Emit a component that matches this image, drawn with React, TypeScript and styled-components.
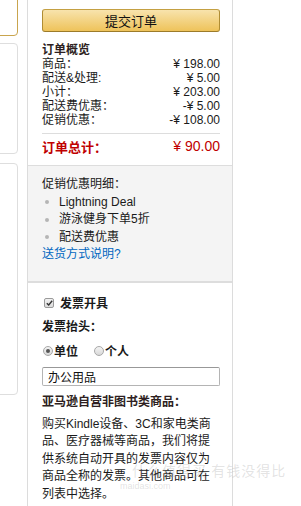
import styled, { createGlobalStyle } from 'styled-components'

const GlobalStyle = createGlobalStyle`
  html, body {
    margin: 0;
    padding: 0;
    background: #fff;
  }
  body {
    font-family: "Liberation Sans", "Noto Sans CJK SC", sans-serif;
    font-size: 12px;
    color: #1a1a1a;
    overflow: hidden;
  }
`

const Page = styled.div`
  position: relative;
  display: flex;
  align-items: flex-start;
  gap: 9px;
  height: 506px;
  overflow: hidden;
`

const LeftColumn = styled.div`
  display: flex;
  flex-direction: column;
  width: 18px;
  flex-shrink: 0;
`

const SideBox = styled.div<{ $gold?: boolean; $height: number; $top: number }>`
  box-sizing: border-box;
  width: 28px;
  margin-left: -10px;
  margin-top: ${({ $top }) => $top}px;
  height: ${({ $height }) => $height}px;
  border: 1px solid ${({ $gold }) => ($gold ? '#c9a54e' : '#dedede')};
  border-radius: 4px;
  background: #fff;
`

const Panel = styled.div`
  box-sizing: border-box;
  width: 206px;
  min-height: 506px;
  border-left: 1px solid #dcdcdc;
  border-right: 1px solid #dcdcdc;
  background: #fff;
`

const TopSection = styled.div`
  padding: 9px 12px 10px 14px;
`

const SubmitButton = styled.button`
  box-sizing: border-box;
  display: block;
  width: 178px;
  height: 23px;
  padding: 0;
  border: 1px solid;
  border-color: #c4a042 #b08d33 #9c7b2a;
  border-radius: 3px;
  background: linear-gradient(to bottom, #f8e3ad, #eec35a);
  font-family: inherit;
  font-size: 13px;
  color: #111;
  cursor: pointer;
`

const SummaryTitle = styled.h3`
  margin: 11px 0 0;
  font-size: 12px;
  line-height: 14px;
  font-weight: bold;
  color: #2e1f22;
`

const SummaryRow = styled.div`
  display: flex;
  justify-content: space-between;
  line-height: 14px;
  white-space: nowrap;
`

const Divider = styled.div`
  height: 1px;
  margin-top: 6px;
  background: #dddddd;
`

const TotalRow = styled.div`
  display: flex;
  justify-content: space-between;
  align-items: center;
  margin-top: 3px;
  height: 18px;
  color: #c00000;
  white-space: nowrap;
`

const TotalLabel = styled.span`
  font-size: 13px;
  font-weight: bold;
`

const TotalValue = styled.span`
  font-size: 14px;
`

const PromoSection = styled.div`
  padding: 10px 12px 17px 14px;
  border-top: 1px solid #dddddd;
  border-bottom: 2px solid #dddddd;
  background: #f4f4f4;
  line-height: 17.5px;
  font-size: 12px;
`

const PromoList = styled.ul`
  margin: 0;
  padding: 0;
  list-style: none;
`

const PromoItem = styled.li`
  display: flex;
  align-items: center;

  &::before {
    content: '';
    width: 4px;
    height: 4px;
    margin: 0 10px 0 3px;
    border-radius: 50%;
    background: #b5b5b5;
  }
`

const Link = styled.a`
  color: #0066c0;
  text-decoration: none;
`

const InvoiceSection = styled.div`
  padding: 10px 12px 0 14px;
`

const CheckRow = styled.label`
  display: flex;
  align-items: center;
  height: 20px;
  font-size: 12px;
  font-weight: bold;
`

const CheckBox = styled.span`
  box-sizing: border-box;
  display: flex;
  align-items: center;
  justify-content: center;
  width: 10px;
  height: 10px;
  margin: 0 6px 0 2px;
  border: 1px solid #9a9a9a;
  border-radius: 2px;
  background: linear-gradient(to bottom, #f2f2f2, #dcdcdc);
`

const FieldTitle = styled.div`
  margin-top: 4px;
  height: 20px;
  line-height: 20px;
  font-weight: bold;
`

const RadioRow = styled.div`
  display: flex;
  align-items: center;
  gap: 15px;
  margin-top: 4px;
  height: 20px;
`

const RadioOption = styled.label`
  display: flex;
  align-items: center;
  font-weight: bold;
`

const RadioDot = styled.span<{ $checked?: boolean }>`
  box-sizing: border-box;
  display: flex;
  align-items: center;
  justify-content: center;
  width: 10px;
  height: 10px;
  margin: 0 1px 0 1px;
  border: 1px solid #a8a8a8;
  border-radius: 50%;
  background: linear-gradient(to bottom, #f4f4f4, #d8d8d8);

  &::after {
    content: '';
    display: ${({ $checked }) => ($checked ? 'block' : 'none')};
    width: 4px;
    height: 4px;
    border-radius: 50%;
    background: #555;
  }
`

const TitleInput = styled.input`
  box-sizing: border-box;
  display: block;
  width: 178px;
  height: 19px;
  margin-top: 6px;
  padding: 0 5px;
  border: 1px solid #b4b4b4;
  border-top-color: #989898;
  border-radius: 2px;
  font-family: inherit;
  font-size: 12px;
  color: #111;
  outline: none;
`

const NoticeTitle = styled.h4`
  margin: 6px 0 0;
  line-height: 20px;
  font-size: 12px;
  font-weight: bold;
  color: #2e1f22;
`

const NoticeText = styled.p`
  width: 176px;
  margin: 4px 0 0;
  line-height: 17.5px;
  font-size: 12px;
`

const Watermark = styled.div`
  position: absolute;
  left: 132px;
  top: 460px;
  font-family: "Noto Sans CJK SC", sans-serif;
  font-size: 14px;
  letter-spacing: 1px;
  color: rgba(160, 160, 160, 0.3);
  pointer-events: none;
  white-space: nowrap;
`

const WatermarkSub = styled.div`
  font-family: "Liberation Sans", sans-serif;
  font-size: 9px;
  letter-spacing: 0;
  margin: 1px 0 0 -12px;
`

const summary = [
  { label: '商品：', value: '¥ 198.00' },
  { label: '配送&处理:', value: '¥ 5.00' },
  { label: '小计：', value: '¥ 203.00' },
  { label: '配送费优惠：', value: '-¥ 5.00' },
  { label: '促销优惠：', value: '-¥ 108.00' }
]

const promos = ['Lightning Deal', '游泳健身下单5折', '配送费优惠']

function App() {
  return (
    <Page>
      <GlobalStyle />
      <LeftColumn>
        <SideBox $gold $top={-10} $height={46} />
        <SideBox $top={7} $height={111} />
        <SideBox $top={9} $height={232} />
      </LeftColumn>

      <Panel>
        <TopSection>
          <SubmitButton type="button">提交订单</SubmitButton>
          <SummaryTitle>订单概览</SummaryTitle>
          {summary.map((row) => (
            <SummaryRow key={row.label}>
              <span>{row.label}</span>
              <span>{row.value}</span>
            </SummaryRow>
          ))}
          <Divider />
          <TotalRow>
            <TotalLabel>订单总计：</TotalLabel>
            <TotalValue>¥ 90.00</TotalValue>
          </TotalRow>
        </TopSection>

        <PromoSection>
          <div>促销优惠明细：</div>
          <PromoList>
            {promos.map((p) => (
              <PromoItem key={p}>{p}</PromoItem>
            ))}
          </PromoList>
          <Link href="#">送货方式说明?</Link>
        </PromoSection>

        <InvoiceSection>
          <CheckRow>
            <CheckBox>
              <svg width="7" height="6" viewBox="0 0 7 6">
                <path d="M0.8 3.2 L2.7 5 L6.2 0.8" fill="none" stroke="#333" strokeWidth="1.4" />
              </svg>
            </CheckBox>
            发票开具
          </CheckRow>
          <FieldTitle>发票抬头：</FieldTitle>
          <RadioRow>
            <RadioOption>
              <RadioDot $checked />
              单位
            </RadioOption>
            <RadioOption>
              <RadioDot />
              个人
            </RadioOption>
          </RadioRow>
          <TitleInput defaultValue="办公用品" />
          <NoticeTitle>亚马逊自营非图书类商品：</NoticeTitle>
          <NoticeText>
            购买Kindle设备、3C和家电类商品、医疗器械等商品，我们将提供系统自动开具的发票内容仅为商品全称的发票。其他商品可在列表中选择。
          </NoticeText>
        </InvoiceSection>
      </Panel>

      <Watermark>
        什么值得买 有钱没得比
        <WatermarkSub>maidasi.com</WatermarkSub>
      </Watermark>
    </Page>
  )
}

export default App
